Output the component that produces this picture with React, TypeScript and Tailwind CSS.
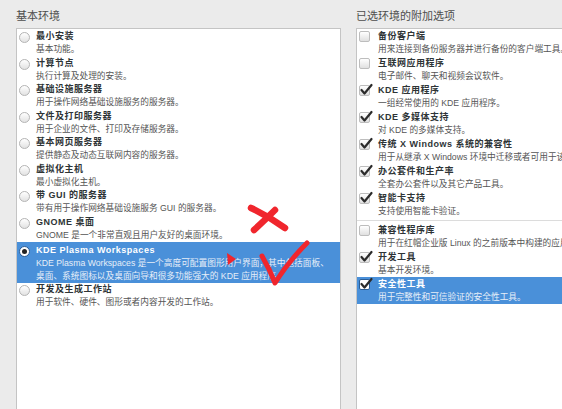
import React from "react";

const cjk = { fontFamily: '"Liberation Sans", "Noto Sans CJK SC", sans-serif' };

const envs = [
  { title: "最小安装", desc: ["基本功能。"] },
  { title: "计算节点", desc: ["执行计算及处理的安装。"] },
  { title: "基础设施服务器", desc: ["用于操作网络基础设施服务的服务器。"] },
  { title: "文件及打印服务器", desc: ["用于企业的文件、打印及存储服务器。"] },
  { title: "基本网页服务器", desc: ["提供静态及动态互联网内容的服务器。"] },
  { title: "虚拟化主机", desc: ["最小虚拟化主机。"] },
  { title: "带 GUI 的服务器", desc: ["带有用于操作网络基础设施服务 GUI 的服务器。"] },
  { title: "GNOME 桌面", desc: ["GNOME 是一个非常直观且用户友好的桌面环境。"] },
  {
    title: "KDE Plasma Workspaces",
    desc: [
      "KDE Plasma Workspaces 是一个高度可配置图形用户界面，其中包括面板、",
      "桌面、系统图标以及桌面向导和很多功能强大的 KDE 应用程序。",
    ],
    selected: true,
  },
  { title: "开发及生成工作站", desc: ["用于软件、硬件、图形或者内容开发的工作站。"] },
];

const addons = [
  { title: "备份客户端", desc: "用来连接到备份服务器并进行备份的客户端工具。", checked: false },
  { title: "互联网应用程序", desc: "电子邮件、聊天和视频会议软件。", checked: false },
  { title: "KDE 应用程序", desc: "一组经常使用的 KDE 应用程序。", checked: true },
  { title: "KDE 多媒体支持", desc: "对 KDE 的多媒体支持。", checked: true },
  { title: "传统 X Windows 系统的兼容性", desc: "用于从继承 X Windows 环境中迁移或者可用于该环境的兼容程序库。", checked: true },
  { title: "办公套件和生产率", desc: "全套办公套件以及其它产品工具。", checked: true },
  { title: "智能卡支持", desc: "支持使用智能卡验证。", checked: true },
];

const addons2 = [
  { title: "兼容性程序库", desc: "用于在红帽企业版 Linux 的之前版本中构建的应用程序的兼容程序库。", checked: false },
  { title: "开发工具", desc: "基本开发环境。", checked: true },
  { title: "安全性工具", desc: "用于完整性和可信验证的安全性工具。", checked: true, selected: true },
];

function Radio({ on }: { on?: boolean }) {
  return (
    <div
      className={
        "mt-[2px] h-[11px] w-[11px] shrink-0 rounded-full border flex items-center justify-center " +
        (on ? "border-[#2a5d96] bg-white" : "border-[#b4b4b4] bg-gradient-to-b from-white to-[#e2e2e2]")
      }
    >
      {on && <div className="h-[5px] w-[5px] rounded-full bg-[#222]" />}
    </div>
  );
}

function Check({ on, sel }: { on?: boolean; sel?: boolean }) {
  return (
    <div className="relative mt-[1px] h-[12px] w-[12px] shrink-0">
      <div
        className={
          "h-[11px] w-[11px] rounded-[2px] border " +
          (sel ? "border-[#2a5d96] bg-white" : "border-[#bdbdbd] bg-gradient-to-b from-white to-[#e0e0e0]")
        }
      />
      {on && (
        <svg className="absolute left-[1px] top-[-2px]" width="13" height="13" viewBox="0 0 13 13">
          <path d="M1.5 7 L4.5 10.5 L11.5 2" fill="none" stroke="#2b2b2b" strokeWidth="2.2" strokeLinecap="round" strokeLinejoin="round" />
        </svg>
      )}
    </div>
  );
}

function AddonRow({ a }: { a: { title: string; desc: string; checked: boolean; selected?: boolean } }) {
  return (
    <div className={"flex h-[27px] gap-[7px] pl-[2px] pt-[1px] " + (a.selected ? "bg-[#4a90d9]" : "")}>
      <Check on={a.checked} sel={a.selected} />
      <div className="min-w-0 whitespace-nowrap">
        <div className={"text-[9px] font-bold leading-[13px] tracking-[0.5px] " + (a.selected ? "text-white" : "text-[#2e3436]")}>{a.title}</div>
        <div className={"text-[8.7px] leading-[12px] " + (a.selected ? "text-[#e6eef8]" : "text-[#555]")}>{a.desc}</div>
      </div>
    </div>
  );
}

export default function App() {
  return (
    <div className="relative h-[409px] w-[562px] overflow-hidden bg-[#ebebeb]" style={cjk}>
      <div className="flex gap-[15px] pl-4">
        <div className="w-[325px] shrink-0">
          <div className="h-[28px] pt-[9px] text-[11px] leading-[14px] text-[#4d4d4d]">基本环境</div>
          <div className="h-[400px] border border-[#c4c4c4] bg-white pt-[1px]">
            {envs.map((e) => (
              <div
                key={e.title}
                className={
                  "flex gap-[6px] pl-[2px] " +
                  (e.selected ? "h-[41px] bg-[#4a90d9] pt-[2px]" : "h-[26.5px]")
                }
              >
                <Radio on={e.selected} />
                <div className="min-w-0 whitespace-nowrap">
                  <div className={"text-[9px] font-bold leading-[13px] tracking-[0.5px] " + (e.selected ? "text-white" : "text-[#2e3436]")}>{e.title}</div>
                  {e.desc.map((d) => (
                    <div key={d} className={"text-[8.7px] leading-[12.5px] " + (e.selected ? "text-[#e6eef8]" : "text-[#555]")}>{d}</div>
                  ))}
                </div>
              </div>
            ))}
          </div>
        </div>
        <div className="w-[230px] shrink-0">
          <div className="h-[28px] pt-[9px] text-[11px] leading-[14px] text-[#4d4d4d]">已选环境的附加选项</div>
          <div className="h-[400px] overflow-hidden border border-r-0 border-[#c4c4c4] bg-white">
            {addons.map((a) => (
              <AddonRow key={a.title} a={a} />
            ))}
            <div className="my-[2px] h-px bg-[#dcdcdc]" />
            {addons2.map((a) => (
              <AddonRow key={a.title} a={a} />
            ))}
          </div>
        </div>
      </div>

      <svg className="pointer-events-none absolute left-0 top-0" width="562" height="409" viewBox="0 0 562 409">
        <g stroke="#f0262d" strokeLinecap="round" strokeLinejoin="round" fill="none">
          <path d="M251 208 Q268 216 285 228" strokeWidth="6.5" />
          <path d="M275 210 Q265 220 254 230" strokeWidth="6.5" />
          <path d="M262 256 Q270 270 275 283 Q288 262 307 243" strokeWidth="5" />
        </g>
        <path d="M227 253 L236 259 L228 265 Z" fill="#f0262d" />
      </svg>
    </div>
  );
}
